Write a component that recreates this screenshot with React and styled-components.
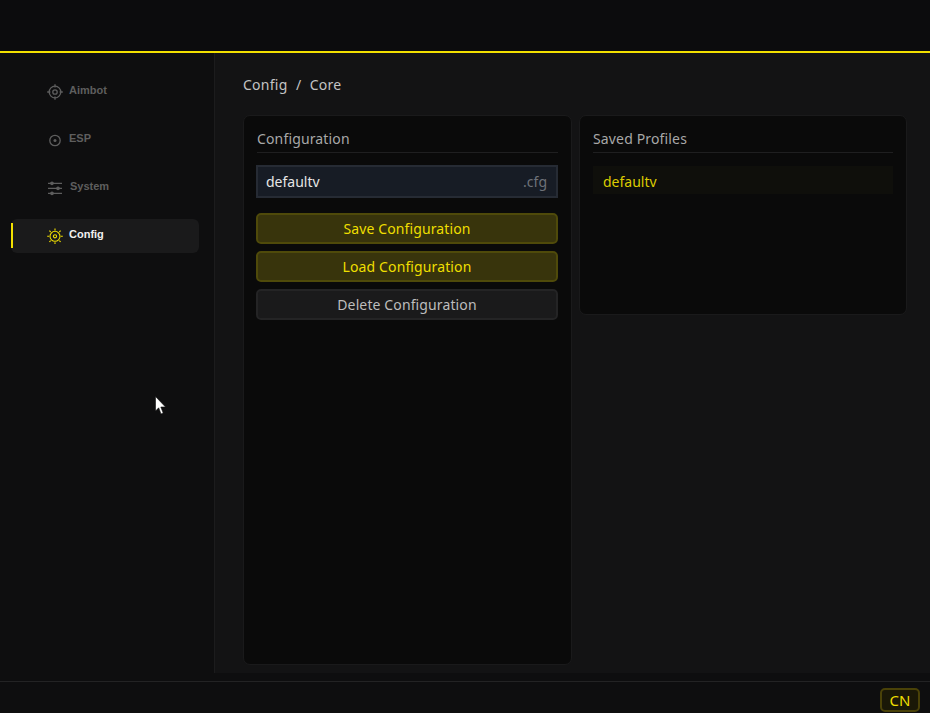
import React from 'react';
import styled, { createGlobalStyle } from 'styled-components';

const Global = createGlobalStyle`
  html, body { margin: 0; padding: 0; background: #0e0e0f; }
  * { box-sizing: border-box; }
`;

const Shell = styled.div`
  position: relative;
  width: 930px;
  height: 713px;
  display: flex;
  flex-direction: column;
  background: #0e0e0f;
  font-family: "Noto Sans", sans-serif;
  overflow: hidden;
`;
const TopBar = styled.header`
  height: 53px;
  flex: none;
  background: #0c0c0d;
  border-bottom: 2px solid #f2e000;
`;
const Middle = styled.div`
  height: 620px;
  flex: none;
  display: flex;
`;
const Sidebar = styled.nav`
  width: 215px;
  flex: none;
  padding: 22px 15px 0 11px;
  display: flex;
  flex-direction: column;
  gap: 14px;
  border-right: 1px solid #1c1c1d;
`;
const NavItem = styled.div`
  position: relative;
  height: 34px;
  display: flex;
  align-items: center;
  padding-left: 36px;
  gap: 6px;
  border-radius: 6px;
  background: ${p => (p.$active ? '#1a1a1b' : 'transparent')};
  color: ${p => (p.$active ? '#f0f0f0' : '#5e5e5e')};
  font: bold 11px "Liberation Sans", sans-serif;
  &::before {
    content: '';
    display: ${p => (p.$active ? 'block' : 'none')};
    position: absolute;
    left: 0;
    top: 4px;
    bottom: 5px;
    width: 2px;
    background: #f2e000;
  }
`;
const NavLabel = styled.span`
  position: relative;
  top: -2px;
  margin-left: ${p => p.$shift || 0}px;
`;
const NavGlyph = styled.span`
  display: flex;
  flex: none;
  color: ${p => (p.$active ? '#f2e000' : 'inherit')};
`;
const Main = styled.main`
  flex: 1;
  background: #131314;
  padding: 22px 22px 8px 28px;
  display: flex;
  flex-direction: column;
`;
const Crumb = styled.div`
  height: 20px;
  line-height: 20px;
  color: #c4c4c4;
  font-size: 14px;
  letter-spacing: 0.25px;
  margin-bottom: 20px;
  word-spacing: 4.5px;
`;
const Columns = styled.div`
  flex: 1;
  display: grid;
  grid-template-columns: 329px 328px;
  gap: 7px;
  align-items: start;
`;
const Panel = styled.section`
  height: ${p => p.$h}px;
  background: #0a0a0a;
  border: 1px solid #1a1a1b;
  border-radius: 7px;
  padding: 13px 13px 0;
`;
const PanelTitle = styled.h2`
  margin: 0;
  height: 24px;
  line-height: 20px;
  font-size: 14px;
  font-weight: 400;
  letter-spacing: 0.15px;
  color: #a8a8a8;
  border-bottom: 1px solid #1f1f20;
`;
const InputBox = styled.div`
  height: 33px;
  display: flex;
  align-items: center;
  justify-content: space-between;
  padding: 0 9px 0 8px;
  margin: 12px 0 15px -1px;
  background: #171c25;
  border: 2px solid #262b34;
  font-size: 14px;
  color: #e6e6e6;
`;
const Ext = styled.span`
  color: #6e7279;
`;
const ButtonStack = styled.div`
  display: flex;
  flex-direction: column;
  gap: 7px;
  margin-left: -1px;
`;
const ActionButton = styled.button`
  height: 31px;
  padding: 0;
  border-radius: 5px;
  font: 400 14px "Noto Sans", sans-serif;
  letter-spacing: 0.12px;
  background: ${p => (p.$primary ? '#38340c' : '#1a1a1b')};
  border: 2px solid ${p => (p.$primary ? '#4f4a0a' : '#242425')};
  color: ${p => (p.$primary ? '#efdf00' : '#bdbdbd')};
`;
const ProfileRow = styled.div`
  height: 28px;
  line-height: 32px;
  margin-top: 13px;
  padding-left: 10px;
  background: #0f0f0b;
  color: #dccb00;
  font-size: 14px;
  overflow: hidden;
`;
const Footer = styled.footer`
  margin-top: 8px;
  flex: 1;
  border-top: 1px solid #232324;
  display: flex;
  justify-content: flex-end;
  align-items: flex-start;
  padding: 6px 10px 0 0;
`;
const LangButton = styled.div`
  width: 40px;
  height: 24px;
  line-height: 21px;
  text-align: center;
  border: 2px solid #4a4208;
  border-radius: 5px;
  background: #1a1807;
  color: #efdf00;
  font-size: 15px;
`;
const Cursor = styled.svg`
  position: absolute;
  left: 155px;
  top: 396px;
`;

const Icon = ({ children, weight = 1.3 }) => (
  <svg width="16" height="16" viewBox="0 0 16 16" fill="none" stroke="currentColor" strokeWidth={weight}>
    {children}
  </svg>
);

const App = () => (
  <Shell>
    <Global />
    <TopBar />
    <Middle>
      <Sidebar>
        <NavItem>
          <NavGlyph>
            <Icon>
              <circle cx="8" cy="8" r="5.8" />
              <circle cx="8" cy="8" r="2.2" />
              <path d="M8 0.2V3.4M8 12.6V15.8M0.2 8H3.4M12.6 8H15.8" />
            </Icon>
          </NavGlyph>
          <NavLabel>Aimbot</NavLabel>
        </NavItem>
        <NavItem>
          <NavGlyph>
            <Icon>
              <circle cx="8" cy="8.5" r="5.2" />
              <circle cx="8" cy="8.5" r="1.5" fill="currentColor" stroke="none" />
            </Icon>
          </NavGlyph>
          <NavLabel>ESP</NavLabel>
        </NavItem>
        <NavItem>
          <NavGlyph>
            <Icon>
              <path d="M1 3.3H15M1 8.3H15M1 13.3H15" />
              <circle cx="5" cy="3.3" r="1.2" fill="currentColor" />
              <circle cx="11" cy="8.3" r="1.2" fill="currentColor" />
              <circle cx="5" cy="13.3" r="1.2" fill="currentColor" />
            </Icon>
          </NavGlyph>
          <NavLabel $shift={1}>System</NavLabel>
        </NavItem>
        <NavItem $active>
          <NavGlyph $active>
            <Icon weight={1.1}>
              <circle cx="8" cy="8.3" r="5" />
              <circle cx="8" cy="8.3" r="1.6" />
              <path d="M8 0.5V2.4M8 14.2V16M0.2 8.3H2.1M13.9 8.3H15.8M2.4 2.7L3.7 4M12.3 12.6L13.6 13.9M13.6 2.7L12.3 4M3.7 12.6L2.4 13.9" />
            </Icon>
          </NavGlyph>
          <NavLabel>Config</NavLabel>
        </NavItem>
      </Sidebar>
      <Main>
        <Crumb>Config / Core</Crumb>
        <Columns>
          <Panel $h={550}>
            <PanelTitle>Configuration</PanelTitle>
            <InputBox>
              <span>defaultv</span>
              <Ext>.cfg</Ext>
            </InputBox>
            <ButtonStack>
              <ActionButton $primary>Save Configuration</ActionButton>
              <ActionButton $primary>Load Configuration</ActionButton>
              <ActionButton>Delete Configuration</ActionButton>
            </ButtonStack>
          </Panel>
          <Panel $h={200}>
            <PanelTitle>Saved Profiles</PanelTitle>
            <ProfileRow>defaultv</ProfileRow>
          </Panel>
        </Columns>
      </Main>
    </Middle>
    <Footer>
      <LangButton>CN</LangButton>
    </Footer>
    <Cursor width="12" height="20" viewBox="0 0 12 20">
      <path d="M0.5 0.5V15L3.7 11.8L6 18L8.2 17L5.8 11H10.5Z" fill="#fff" stroke="#111" strokeWidth="0.6" />
    </Cursor>
  </Shell>
);

export default App;
